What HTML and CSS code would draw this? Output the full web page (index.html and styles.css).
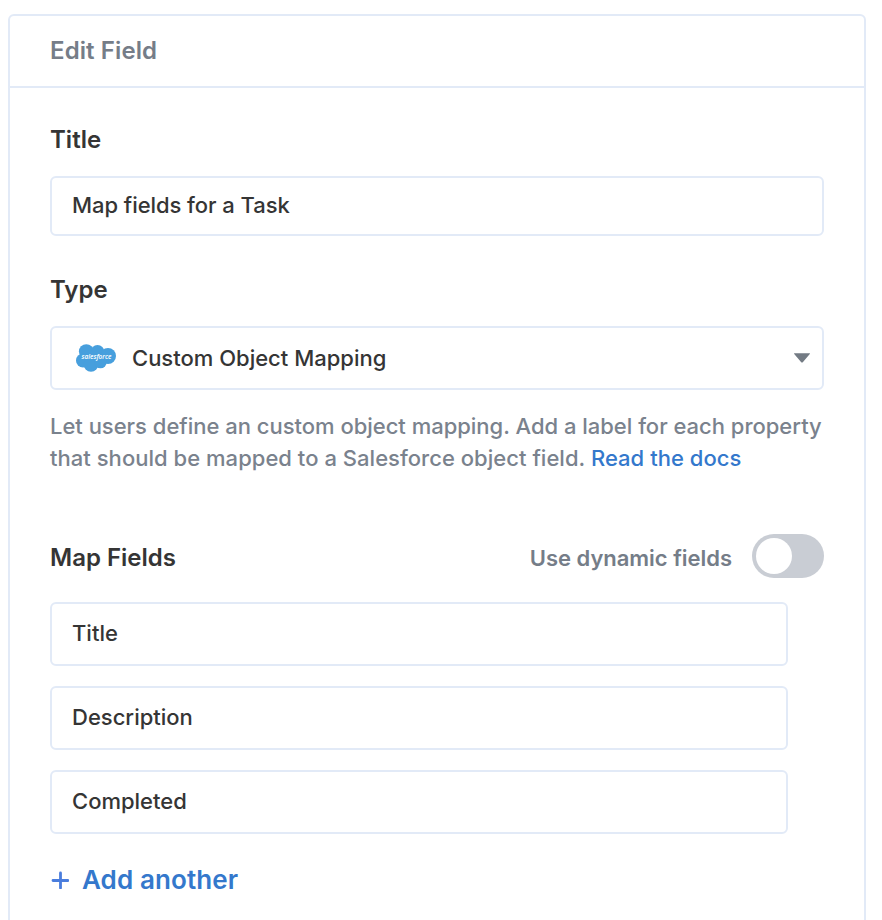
FILE: index.html
```html
<!DOCTYPE html>
<html lang="en">
<head>
<meta charset="utf-8">
<title>Edit Field</title>
<link rel="stylesheet" href="styles.css">
</head>
<body>
<main class="panel">
  <header class="panel-header">Edit Field</header>
  <div class="panel-body">
    <h2 class="label">Title</h2>
    <div class="input title-input"><span>Map fields for a Task</span></div>
    <h2 class="label type-label">Type</h2>
    <div class="input select">
      <svg class="logo" width="40" height="28" viewBox="0 0 40 28">
        <g fill="#479fdd"><circle cx="10.3" cy="7.6" r="7.4"/><circle cx="21.5" cy="8" r="6.9"/><circle cx="32" cy="12" r="8"/><circle cx="7" cy="16.5" r="7"/><circle cx="15" cy="20.3" r="7.5"/><circle cx="24.5" cy="18" r="6.3"/></g>
        <text x="20.5" y="15" class="logo-text" text-anchor="middle" textLength="30" lengthAdjust="spacingAndGlyphs">salesforce</text>
      </svg>
      <span class="select-text">Custom Object Mapping</span>
      <svg class="caret" width="18" height="10" viewBox="0 0 18 10"><path d="M1.5.3h15q1 0 .3.8L10 9q-1 1-2 0L1.2 1.1Q.5.3 1.5.3Z" fill="#737b84"/></svg>
    </div>
    <p class="help"><span class="help-first">Let users define an custom object mapping. Add a label for each property</span><br><span class="help-second">that should be mapped to a Salesforce object field. <a class="docs">Read the docs</a></span></p>
    <div class="map-header">
      <h2 class="label">Map Fields</h2>
      <div class="dynamic"><span>Use dynamic fields</span><div class="toggle"></div></div>
    </div>
    <div class="fields">
      <div class="input"><span>Title</span></div>
      <div class="input"><span>Description</span></div>
      <div class="input"><span>Completed</span></div>
    </div>
    <div class="add"><svg width="18" height="18" viewBox="0 0 18 18"><path d="M9.5 2v15M2 9.5h15" stroke="#4a7ddd" stroke-width="2.8" stroke-linecap="round"/></svg><span>Add another</span></div>
  </div>
</main>
</body>
</html>
```
FILE: styles.css
```css
* { box-sizing: border-box; }
body { margin: 0; height: 920px; overflow: hidden; padding: 14px 16px 0 8px; background: #fff; color: #353535; font: 500 22px/32px Inter, sans-serif; }
.panel { height: 940px; border: 2px solid #e2eaf7; border-radius: 6px; }
.panel-header { height: 72px; padding: 0 40px; border-bottom: 2px solid #e2eaf7; color: #757d88; font-size: 24px; font-weight: 600; line-height: 70px; letter-spacing: .1px; }
.panel-body { padding: 36px 40px 0; }
.label { margin: 0; font-size: 24px; font-weight: 600; line-height: 32px; }
.input { display: flex; align-items: center; height: 64px; padding: 0 20px; border: 2px solid #e2eaf7; border-radius: 6px; }
.input span { padding-bottom: 2px; }
.title-input { height: 60px; margin-top: 20px; letter-spacing: -.06px; }
.type-label { margin-top: 38px; }
.select { margin-top: 20px; padding: 0 11px 0 24px; }
.input .select-text { padding: 0; }
.logo { margin-right: 16px; }
.logo-text { fill: #fff; font: italic 600 7px "Open Sans", sans-serif; }
.caret { margin-left: auto; }
.help { margin: 20px 0 0; color: #7a828d; white-space: nowrap; }
.help-first { letter-spacing: -.015px; }
.help-second { letter-spacing: .03px; }
.docs { color: #3478cc; }
.map-header { display: flex; align-items: center; justify-content: space-between; height: 44px; margin-top: 60px; }
.map-header .label, .dynamic span { padding-top: 4px; }
.dynamic { display: flex; align-items: center; color: #757d88; font-weight: 600; letter-spacing: -.03px; }
.toggle { width: 72px; height: 44px; margin-left: 20px; padding: 4px; border-radius: 22px; background: #c9cdd4; }
.toggle::before { content: ""; display: block; width: 36px; height: 36px; border-radius: 50%; background: #fff; }
.fields { display: grid; gap: 20px; width: 738px; margin-top: 24px; }
.add { display: flex; align-items: center; gap: 13px; margin-top: 30px; padding-left: 1px; color: #3478cc; font-size: 26px; font-weight: 600; letter-spacing: .1px; }
```
